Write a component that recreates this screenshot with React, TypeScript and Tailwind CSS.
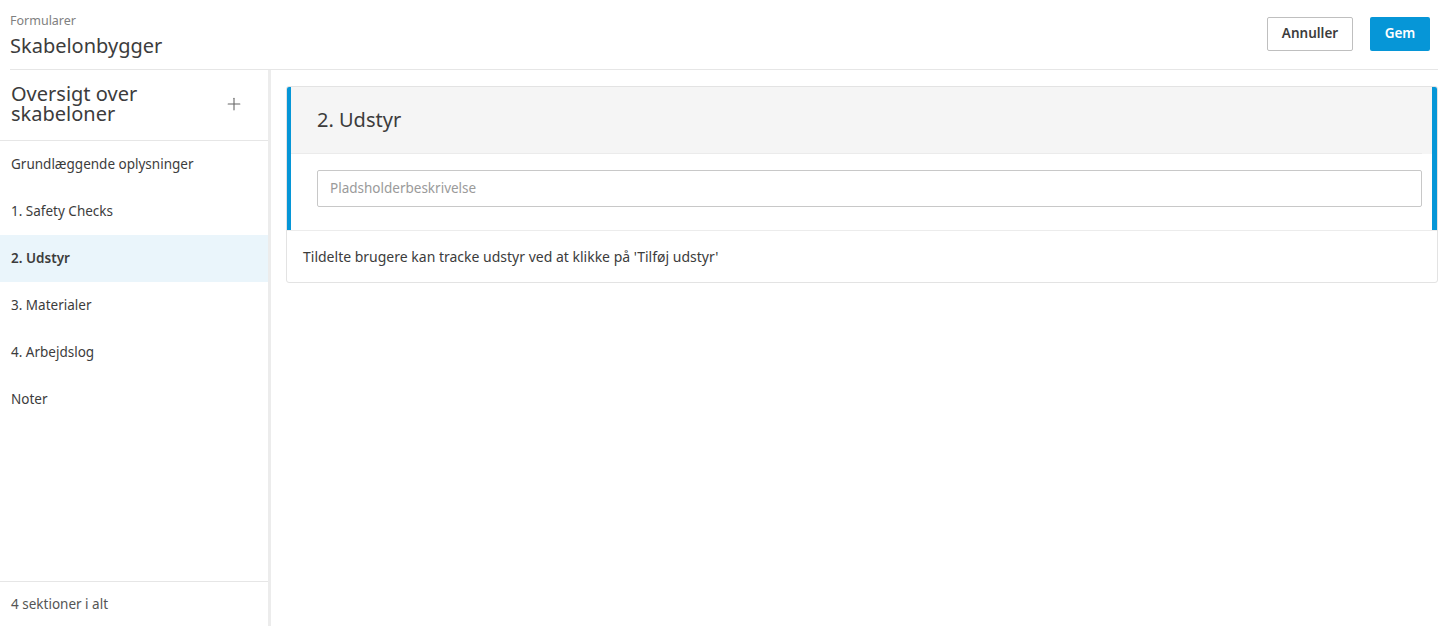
import { Plus } from 'lucide-react'

const SECTIONS = [
    'Grundlæggende oplysninger',
    '1. Safety Checks',
    '2. Udstyr',
    '3. Materialer',
    '4. Arbejdslog',
    'Noter',
]

export default function App() {
    const active = '2. Udstyr'

    return (
        <div
            className="h-[626px] w-full flex flex-col bg-white text-[#3c3c3c] overflow-hidden"
            style={{ fontFamily: '"Noto Sans", "Open Sans", sans-serif' }}
        >
            {/* Top header */}
            <div className="mx-[10px] h-[70px] shrink-0 flex items-center justify-between border-b border-[#e6e6e6]">
                <div className="flex flex-col pt-[2px]">
                    <span className="text-[12.5px] leading-[18px] text-[#808080]">Formularer</span>
                    <span className="text-[20px] leading-[26px] mt-[3px]">Skabelonbygger</span>
                </div>
                <div className="flex items-center gap-[17px] pb-[2px] mr-[8px]">
                    <button className="h-[34px] w-[86px] border border-[#bfbfbf] rounded-[2px] bg-white text-[13.5px] font-semibold text-[#3c3c3c]">
                        Annuller
                    </button>
                    <button className="h-[34px] w-[60px] rounded-[2px] bg-[#0696d7] text-[13.5px] font-semibold text-white">
                        Gem
                    </button>
                </div>
            </div>

            <div className="flex flex-1 min-h-0">
                {/* Sidebar */}
                <div className="w-[271px] shrink-0 flex flex-col border-r-[3px] border-[#ececec]">
                    <div className="h-[71px] shrink-0 flex items-center justify-between pl-[11px] pr-[24px] border-b border-[#e6e6e6]">
                        <div className="text-[20px] leading-[20px] pb-[2px]">Oversigt over<br />skabeloner</div>
                        <Plus className="w-[20px] h-[20px] text-[#666666] mb-[2px]" strokeWidth={1.3} />
                    </div>
                    <div className="flex-1 flex flex-col">
                        {SECTIONS.map(s => (
                            <div
                                key={s}
                                className={
                                    s === active
                                        ? 'h-[47px] flex items-center px-[11px] text-[13.5px] font-semibold text-[#3c3c3c] bg-[#eaf5fb]'
                                        : 'h-[47px] flex items-center px-[11px] text-[13.5px] text-[#3c3c3c]'
                                }
                            >
                                {s}
                            </div>
                        ))}
                    </div>
                    <div className="h-[45px] shrink-0 flex items-center px-[11px] border-t border-[#e6e6e6] text-[13.5px] text-[#555555]">
                        4 sektioner i alt
                    </div>
                </div>

                {/* Main */}
                <div className="flex-1 pl-[15px] pr-[10px] pt-[16px]">
                    <div className="border border-[#e3e3e3] rounded-[3px] overflow-hidden">
                        <div className="border-l-[5px] border-r-[6px] border-[#0696d7] -ml-px -mr-px -mt-px">
                            <div className="bg-[#f5f5f5]">
                                <div className="h-[68px] flex items-center pl-[26px] border-b border-[#ebebeb] mr-[10px]">
                                    <span className="text-[20px] text-[#3c3c3c]">2. Udstyr</span>
                                </div>
                            </div>
                            <div className="pl-[26px] pr-[10px] pt-[16px] pb-[23px] bg-white">
                                <div className="h-[37px] border border-[#c8c8c8] rounded-[2px] flex items-center px-[12px] text-[13.5px] text-[#9a9a9a]">
                                    Pladsholderbeskrivelse
                                </div>
                            </div>
                        </div>
                        <div className="h-[52px] flex items-center px-[16px] border-t border-[#ececec] text-[14px] text-[#3c3c3c]">
                            Tildelte brugere kan tracke udstyr ved at klikke på 'Tilføj udstyr'
                        </div>
                    </div>
                </div>
            </div>
        </div>
    )
}
